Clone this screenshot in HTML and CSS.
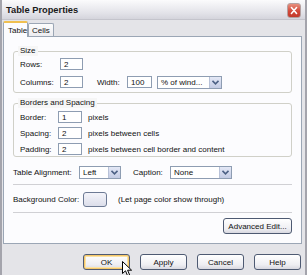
FILE: index.html
```html
<!DOCTYPE html>
<html>
<head>
    <title>Table Properties</title>
    <link rel="stylesheet" href="styles.css">
</head>
<body>
    <div class="window">
        <div class="titlebar">
            <span class="title">Table Properties</span>
            <span class="close">
                <svg width="14" height="15" viewBox="0 0 14 15">
                    <path d="M4 4 L10 11 M10 4 L4 11" stroke="#fff" stroke-width="1.8" stroke-linecap="round"/>
                </svg>
            </span>
        </div>
        <div class="tabs">
            <span class="tab active">Table</span>
            <span class="tab">Cells</span>
        </div>
        <div class="panel">
            <fieldset class="group group-size">
                <legend>Size</legend>
                <div class="row">
                    <span class="lbl lbl-rows">Rows:</span>
                    <span class="field f-num">2</span>
                </div>
                <div class="row">
                    <span class="lbl lbl-rows">Columns:</span>
                    <span class="field f-num">2</span>
                    <span class="lbl lbl-width">Width:</span>
                    <span class="field f-width">100</span>
                    <span class="field select s-unit">% of wind...<span class="arrow"><svg width="7" height="5" viewBox="0 0 7 5"><path d="M0.5 0.8 L3.5 3.8 L6.5 0.8" stroke="#4d6185" stroke-width="1.6" fill="none"/></svg></span></span>
                </div>
            </fieldset>

            <fieldset class="group group-borders">
                <legend>Borders and Spacing</legend>
                <div class="row">
                    <span class="lbl lbl-border">Border:</span>
                    <span class="field f-small">1</span>
                    <span class="hint">pixels</span>
                </div>
                <div class="row">
                    <span class="lbl lbl-border">Spacing:</span>
                    <span class="field f-small">2</span>
                    <span class="hint">pixels between cells</span>
                </div>
                <div class="row">
                    <span class="lbl lbl-border">Padding:</span>
                    <span class="field f-small">2</span>
                    <span class="hint">pixels between cell border and content</span>
                </div>
            </fieldset>

            <div class="row row-align">
                <span class="lbl lbl-align">Table Alignment:</span>
                <span class="field select s-align">Left<span class="arrow"><svg width="7" height="5" viewBox="0 0 7 5"><path d="M0.5 0.8 L3.5 3.8 L6.5 0.8" stroke="#4d6185" stroke-width="1.6" fill="none"/></svg></span></span>
                <span class="lbl lbl-caption">Caption:</span>
                <span class="field select s-caption">None<span class="arrow"><svg width="7" height="5" viewBox="0 0 7 5"><path d="M0.5 0.8 L3.5 3.8 L6.5 0.8" stroke="#4d6185" stroke-width="1.6" fill="none"/></svg></span></span>
            </div>

            <div class="sep sep-1"></div>

            <div class="row row-color">
                <span class="lbl lbl-bg">Background Color:</span>
                <span class="color-btn"></span>
                <span class="hint hint-color">(Let page color show through)</span>
            </div>

            <div class="sep sep-2"></div>

            <div class="row row-adv">
                <span class="btn btn-adv">Advanced Edit...</span>
            </div>
        </div>
        <div class="buttons">
            <span class="btn btn-ok">OK</span>
            <span class="btn">Apply</span>
            <span class="btn">Cancel</span>
            <span class="btn">Help</span>
        </div>
        <svg class="cursor" width="11" height="16" viewBox="0 0 11 16">
            <path d="M0.5 0.5 L0.5 12.5 L3.5 9.8 L5.6 14.8 L7.6 13.9 L5.6 9.2 L9.6 9.2 Z" fill="#fff" stroke="#000" stroke-width="1" stroke-linejoin="round"/>
        </svg>
    </div>
</body>
</html>
```

FILE: styles.css
```css
html, body {
    margin: 0;
    padding: 0;
}
body {
    width: 307px;
    height: 275px;
    overflow: hidden;
    font-family: "Liberation Sans", Arial, sans-serif;
    font-size: 8px;
    color: #111;
}
.window {
    position: relative;
    width: 307px;
    height: 275px;
    box-sizing: border-box;
    background: #e4e4e8;
    border-left: 2px solid #a4a4ac;
    border-right: 2px solid #a4a4ac;
}
.titlebar {
    height: 20px;
    display: flex;
    align-items: center;
    justify-content: space-between;
    padding: 0 4px 0 4px;
    background: linear-gradient(#fbfbfc, #e2e2e8 70%, #d4d4dc);
    border-bottom: 1px solid #c4c4cc;
    box-sizing: border-box;
}
.title {
    font-weight: bold;
    font-size: 9.3px;
    color: #1a1a1a;
}
.close {
    width: 14px;
    height: 15px;
    margin-top: 1px;
    border-radius: 3px;
    background: linear-gradient(#e8907e, #d2493a 55%, #c23a2c);
    border: 1px solid #b4a0a0;
    box-sizing: border-box;
    display: flex;
    align-items: center;
    justify-content: center;
}
.close svg {
    display: block;
}
.tabs {
    height: 16px;
    display: flex;
    align-items: flex-end;
    padding-left: 1px;
    position: relative;
    z-index: 1;
}
.tab {
    height: 13px;
    padding: 0 3px;
    display: flex;
    align-items: center;
    background: linear-gradient(#fdfdfd, #ececf0);
    border: 1px solid #9ba6b5;
    border-bottom: none;
    border-radius: 2px 2px 0 0;
    box-sizing: border-box;
}
.tab.active {
    height: 16px;
    padding: 0 4px;
    background: #fcfcfe;
    border-top: 2px solid #f0c050;
    margin-bottom: -1px;
    width: 25px;
}
.panel {
    margin: 0 3px 0 1px;
    height: 208px;
    background: #fcfcfe;
    border: 1px solid #9ba6b5;
    box-sizing: border-box;
    padding: 0 9px 0 9px;
    display: flex;
    flex-direction: column;
}
.group {
    margin: 0;
    border: 1px solid #d0d0c8;
    border-radius: 3px;
    padding: 2px 6px 4px 6px;
    display: flex;
    flex-direction: column;
}
.group legend {
    padding: 0 2px;
    margin-left: -2px;
    height: 10px;
    line-height: 10px;
    background: #f6f6f6;
}
.group-size {
    margin-top: 9px;
    gap: 6px;
}
.group-borders {
    margin-top: 5px;
    padding-top: 3px;
    padding-bottom: 1px;
    gap: 4px;
}
.row {
    display: flex;
    align-items: center;
    height: 12px;
}
.lbl-rows {
    width: 40px;
}
.lbl-width {
    width: 30px;
    margin-left: 14px;
}
.lbl-border {
    width: 38px;
}
.lbl-align {
    width: 66px;
}
.lbl-caption {
    margin-left: 12px;
    width: 37px;
}
.lbl-bg {
    width: 70px;
}
.field {
    height: 12px;
    box-sizing: border-box;
    border: 1px solid #8e9db2;
    background: #fff;
    padding-left: 3px;
    display: flex;
    align-items: center;
    position: relative;
}
.f-num {
    width: 23px;
}
.f-width {
    width: 25px;
}
.f-small {
    width: 24px;
}
.hint {
    margin-left: 6px;
}
.select {
    height: 13px;
}
.s-unit {
    width: 65px;
    margin-left: 5px;
}
.s-align {
    width: 42px;
}
.s-caption {
    width: 62px;
}
.arrow {
    position: absolute;
    right: 0;
    top: 0;
    bottom: 0;
    width: 12px;
    background: linear-gradient(#e4e8f6, #c4cce4);
    border-left: 1px solid #b8c2d8;
    box-sizing: border-box;
    display: flex;
    align-items: center;
    justify-content: center;
}
.arrow svg {
    display: block;
}
.row-align {
    margin-top: 9px;
    height: 13px;
}
.sep {
    height: 0;
    border-top: 1px solid #d0d0d4;
}
.sep-1 {
    margin-top: 5px;
}
.row-color {
    margin-top: 7px;
    height: 15px;
}
.color-btn {
    width: 24px;
    height: 15px;
    box-sizing: border-box;
    border: 1px solid #6d7a94;
    border-radius: 3px;
    background: linear-gradient(#f4f4fa, #dcdeea);
}
.hint-color {
    margin-left: 11px;
}
.sep-2 {
    margin-top: 5px;
}
.row-adv {
    margin-top: 5px;
    height: 16px;
    justify-content: flex-end;
}
.btn {
    height: 16px;
    box-sizing: border-box;
    border: 1px solid #4e5a72;
    border-radius: 3px;
    background: linear-gradient(#ffffff, #eeeef2 70%, #d8d8e0);
    display: flex;
    align-items: center;
    justify-content: center;
}
.btn-adv {
    width: 69px;
}
.buttons {
    display: flex;
    justify-content: flex-end;
    gap: 10px;
    padding: 10px 4px 0 0;
}
.buttons .btn {
    width: 47px;
}
.btn-ok {
    box-shadow: inset 0 0 0 1px #f5c76a, inset 0 0 0 2px #fbe3a6;
}
.cursor {
    position: absolute;
    left: 120px;
    top: 261px;
}
```
